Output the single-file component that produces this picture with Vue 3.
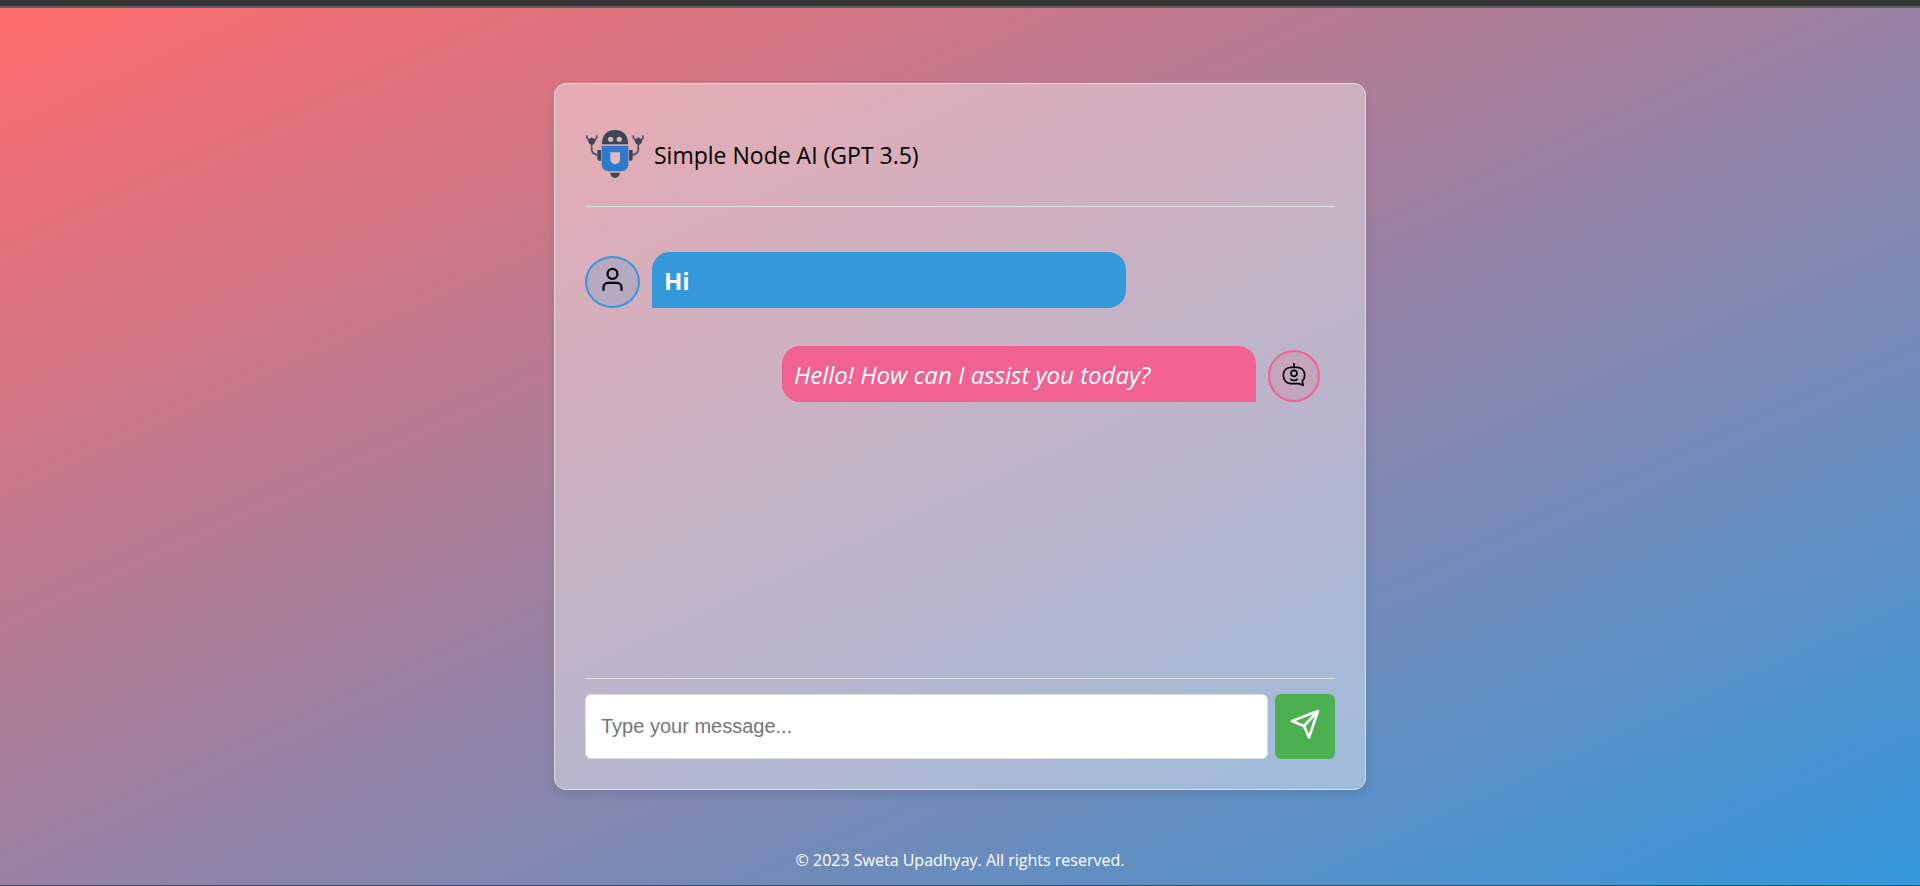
<script setup>
import { ref } from 'vue'

const draft = ref('')
const messages = ref([
  { id: 1, from: 'user', text: 'Hi' },
  { id: 2, from: 'bot', text: 'Hello! How can I assist you today?' },
])

function send() {
  const text = draft.value.trim()
  if (!text) return
  messages.value.push({ id: messages.value.length + 1, from: 'user', text })
  draft.value = ''
}
</script>

<template>
  <div class="page">
    <main class="card">
      <header class="header">
        <svg class="robot" viewBox="30 24 180 150" aria-hidden="true">
          <g fill="none" stroke="#4a5361" stroke-width="5">
            <path d="M50 66V88Q51 103 70 105" />
            <path d="M190 66V88Q189 103 170 105" />
            <path d="M36 46V54Q40 60 50 62Q61 60 65 54V46" />
            <path d="M175 46V54Q179 60 190 62Q200 60 204 54V46" />
          </g>
          <g fill="#3d4754">
            <path d="M50 52L62 60Q60 73 50 75Q40 72 39 60Z" />
            <path d="M190 52L202 60Q200 73 190 75Q180 72 179 60Z" />
            <path d="M81 73V66Q85 31 120 30Q155 31 159 66V73Z" />
            <path d="M67 90H78V122H71Q67 120 67 116Z" />
            <path d="M173 90H162V122H169Q173 120 173 116Z" />
            <path d="M105 158H135Q132 172 120 174Q108 172 105 158Z" />
          </g>
          <path d="M80 77H160V136Q157 152 141 154H99Q83 152 80 136Z" fill="#2d7bc8" />
          <path d="M106 97H135V121Q132 132 120 133Q109 131 106 121Z" fill="#dfb9c4" />
          <circle cx="107" cy="58" r="8" fill="#dfb3be" />
          <circle cx="133" cy="58" r="8" fill="#dfb3be" />
        </svg>
        <h1 class="title">Simple Node AI (GPT 3.5)</h1>
      </header>

      <section class="chat" aria-label="Conversation">
        <div v-for="m in messages" :key="m.id" class="row" :class="m.from">
          <div class="avatar">
            <svg v-if="m.from === 'user'" class="user-icon" viewBox="0 0 24 24" aria-hidden="true">
              <path d="M20 22v-3a4 4 0 0 0-4-4H8a4 4 0 0 0-4 4v3" />
              <circle cx="12" cy="7" r="4.4" />
            </svg>
            <svg v-else class="bot-icon" viewBox="182 96 78 78" aria-hidden="true">
              <path d="M221 99V111M212 112H230C244 112 253 122 253 135C253 143 250 149 246 153L248 165L236 161H212C198 161 189 150 189 136C189 122 198 112 212 112Z" />
              <circle cx="221" cy="130" r="9" />
              <path d="M210 147Q221 156 232 147" />
            </svg>
          </div>
          <p class="bubble">{{ m.text }}</p>
        </div>
      </section>

      <form class="composer" @submit.prevent="send">
        <input v-model="draft" class="field" type="text" aria-label="Message" placeholder="Type your message..." />
        <button class="send" type="submit" aria-label="Send">
          <svg viewBox="0 0 30 30" aria-hidden="true">
            <path d="M28 2L2 12L14 17L19 28.500Z M28 2L14 17" />
          </svg>
        </button>
      </form>
    </main>

    <footer class="footer">© 2023 Sweta Upadhyay. All rights reserved.</footer>
  </div>
</template>

<style>
body {
  margin: 0;
}
</style>

<style scoped>
.page {
  box-sizing: border-box;
  min-height: 100vh;
  display: flex;
  flex-direction: column;
  align-items: center;
  padding: 77px 20px 14px;
  border-top: 6px solid #353535;
  border-bottom: 1px solid #40516a;
  background: linear-gradient(to bottom right, #ff6b6b, #3498db) padding-box;
  box-shadow: inset 0 2px #606060;
  font-family: "Open Sans", "Noto Sans", sans-serif;
}
.card {
  box-sizing: border-box;
  flex: 1;
  width: 100%;
  max-width: 812px;
  display: flex;
  flex-direction: column;
  padding: 30px;
  border: 1px solid #ddd;
  border-radius: 12px;
  background: rgba(255, 255, 255, 0.4);
  box-shadow: 0 4px 8px rgba(0, 0, 0, 0.1);
}
.header {
  display: flex;
  align-items: center;
  gap: 9px;
  padding: 14px 0 28px;
  border-bottom: 1px solid #ddd;
}
.robot {
  width: 60px;
  height: 50px;
}
.title {
  margin: 4px 0 0;
  font-size: 23px;
  font-weight: 400;
  line-height: 32px;
  color: #000;
}
.chat {
  flex: 1;
  display: flex;
  flex-direction: column;
  gap: 38px;
  padding: 45px 15px 20px 0;
}
.row {
  display: flex;
  align-items: flex-end;
  gap: 12px;
}
.bot {
  flex-direction: row-reverse;
}
.avatar {
  box-sizing: border-box;
  flex: none;
  width: 55px;
  height: 52px;
  display: flex;
  justify-content: center;
  align-items: center;
  border: 2px solid #3498db;
  border-radius: 50%;
  background: rgba(52, 152, 219, 0.2);
}
.bot .avatar {
  width: 52px;
  border-color: #f06292;
  background: rgba(240, 98, 146, 0.2);
}
.avatar svg {
  fill: none;
  stroke: #000;
}
.user-icon {
  width: 27px;
  height: 27px;
  margin-bottom: 5px;
  stroke-width: 2;
}
.bot-icon {
  width: 26px;
  height: 26px;
  margin-bottom: 2px;
  stroke-width: 5;
}
.bubble {
  box-sizing: border-box;
  width: 64.5%;
  margin: 0;
  padding: 13px 12px 11px;
  border-radius: 18px 18px 18px 0;
  background: #3498db;
  color: #fff;
  font-size: 24px;
  font-weight: 700;
  line-height: 32px;
}
.bot .bubble {
  border-radius: 18px 18px 0 18px;
  background: #f06292;
  font-weight: 400;
  font-style: italic;
}
.composer {
  display: flex;
  gap: 7px;
  padding-top: 15px;
  border-top: 1px solid #ddd;
}
.field {
  box-sizing: border-box;
  flex: 1;
  min-width: 0;
  height: 65px;
  padding: 0 15px;
  border: 1px solid #ddd;
  border-radius: 6px;
  background: #fff;
  font-family: "Liberation Sans", sans-serif;
  font-size: 20px;
  color: #222;
}
.field::placeholder {
  color: #757575;
}
.send {
  width: 60px;
  height: 65px;
  padding: 0 0 5px;
  border: 0;
  border-radius: 6px;
  background: #4caf50;
  display: flex;
  justify-content: center;
  align-items: center;
}
.send svg {
  width: 30px;
  height: 30px;
  fill: none;
  stroke: #fff;
  stroke-width: 2.6;
  stroke-linejoin: round;
}
.footer {
  margin-top: 59px;
  color: #fff;
  font-size: 16px;
  line-height: 22px;
  text-align: center;
}
</style>
